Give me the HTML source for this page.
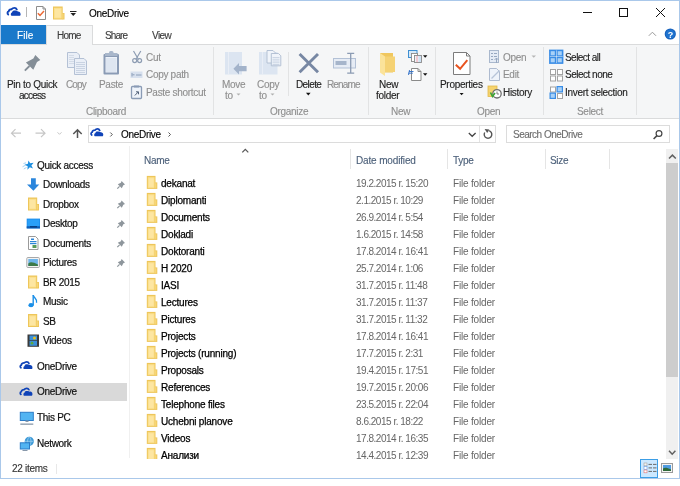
<!DOCTYPE html>
<html><head><meta charset="utf-8">
<style>
*{margin:0;padding:0;box-sizing:border-box}
html,body{width:680px;height:486px;overflow:hidden;background:#fff}
body{filter:blur(0.25px)}
body{position:relative;font-family:"Liberation Sans",sans-serif;font-size:10px;line-height:12px;letter-spacing:-0.3px;color:#000;-webkit-text-stroke:0.12px currentColor}
.a{position:absolute}
.t{position:absolute;white-space:nowrap}
svg{position:absolute;overflow:visible}
</style></head><body>
<div class="a" style="left:0px;top:0px;width:680px;height:479px;border:1px solid #aac8ea"></div>
<div class="t" style="left:89px;top:8px;color:#000">OneDrive</div>
<div class="a" style="left:1px;top:25px;width:45px;height:19px;background:#1979ca"></div>
<div class="t" style="left:17px;top:30px;color:#fff;letter-spacing:0.1px">File</div>
<div class="a" style="left:46px;top:25px;width:47px;height:20px;background:#f5f6f7;border:1px solid #dadbdc;border-bottom:none"></div>
<div class="t" style="left:57px;top:30px;color:#3c3c3c;letter-spacing:-0.75px">Home</div>
<div class="t" style="left:105px;top:30px;color:#3c3c3c;letter-spacing:-0.9px">Share</div>
<div class="t" style="left:152px;top:30px;color:#3c3c3c;letter-spacing:-0.55px">View</div>
<div class="a" style="left:1px;top:44px;width:678px;height:75px;background:#f5f6f7;border-top:1px solid #dadbdc;border-bottom:1px solid #dadbdc"></div>
<div class="a" style="left:47px;top:44px;width:45px;height:2px;background:#f5f6f7"></div>
<div class="a" style="left:213px;top:47px;width:1px;height:68px;background:#e2e3e4"></div>
<div class="a" style="left:368px;top:47px;width:1px;height:68px;background:#e2e3e4"></div>
<div class="a" style="left:435px;top:47px;width:1px;height:68px;background:#e2e3e4"></div>
<div class="a" style="left:543px;top:47px;width:1px;height:68px;background:#e2e3e4"></div>
<div class="a" style="left:636px;top:47px;width:1px;height:68px;background:#e2e3e4"></div>
<div class="a" style="left:288px;top:52px;width:1px;height:44px;background:#e2e3e4"></div>
<div class="t" style="left:7px;top:79px;color:#222;">Pin to Quick</div>
<div class="t" style="left:19px;top:90px;color:#222;letter-spacing:-0.8px">access</div>
<div class="t" style="left:66px;top:79px;color:#8f8f8f;letter-spacing:-0.9px">Copy</div>
<div class="t" style="left:99px;top:79px;color:#8f8f8f;">Paste</div>
<div class="t" style="left:146px;top:52px;color:#8f8f8f;">Cut</div>
<div class="t" style="left:146px;top:69px;color:#8f8f8f;">Copy path</div>
<div class="t" style="left:146px;top:87px;color:#8f8f8f;">Paste shortcut</div>
<div class="t" style="left:86px;top:106px;color:#8f8f8f;">Clipboard</div>
<div class="t" style="left:222px;top:79px;color:#8f8f8f;">Move</div>
<div class="t" style="left:225px;top:90px;color:#8f8f8f;">to</div>
<div class="t" style="left:257px;top:79px;color:#8f8f8f;">Copy</div>
<div class="t" style="left:259px;top:90px;color:#8f8f8f;">to</div>
<div class="t" style="left:296px;top:79px;color:#222;letter-spacing:-0.6px">Delete</div>
<div class="t" style="left:327px;top:79px;color:#8f8f8f;letter-spacing:-0.85px">Rename</div>
<div class="t" style="left:270px;top:106px;color:#8f8f8f;">Organize</div>
<div class="t" style="left:379px;top:79px;color:#222;">New</div>
<div class="t" style="left:376px;top:90px;color:#222;">folder</div>
<div class="t" style="left:391px;top:106px;color:#8f8f8f;">New</div>
<div class="t" style="left:440px;top:79px;color:#222;">Properties</div>
<div class="t" style="left:503px;top:52px;color:#8f8f8f;">Open</div>
<div class="t" style="left:503px;top:69px;color:#8f8f8f;">Edit</div>
<div class="t" style="left:503px;top:87px;color:#222;">History</div>
<div class="t" style="left:477px;top:106px;color:#8f8f8f;">Open</div>
<div class="t" style="left:565px;top:52px;color:#222;letter-spacing:-0.55px">Select all</div>
<div class="t" style="left:565px;top:69px;color:#222;letter-spacing:-0.5px">Select none</div>
<div class="t" style="left:565px;top:87px;color:#222;">Invert selection</div>
<div class="t" style="left:577px;top:106px;color:#8f8f8f;">Select</div>
<div class="a" style="left:88px;top:125px;width:408px;height:18px;border:1px solid #dcdcdc;background:#fff"></div>
<div class="a" style="left:479px;top:126px;width:1px;height:16px;background:#e3e3e3"></div>
<div class="a" style="left:506px;top:125px;width:164px;height:18px;border:1px solid #dcdcdc;background:#fff"></div>
<div class="t" style="left:121px;top:129px;color:#000">OneDrive</div>
<div class="t" style="left:513px;top:129px;color:#6d6d6d;letter-spacing:-0.5px">Search OneDrive</div>
<div class="a" style="left:129px;top:146px;width:1px;height:312px;background:#f0f0f0"></div>
<div class="a" style="left:1px;top:383px;width:126px;height:18px;background:#d9d9d9"></div>
<div class="t" style="left:37px;top:160px;color:#111;-webkit-text-stroke:0.2px #111">Quick access</div>
<div class="t" style="left:43px;top:179px;color:#111;-webkit-text-stroke:0.2px #111">Downloads</div>
<div class="t" style="left:43px;top:199px;color:#111;-webkit-text-stroke:0.2px #111">Dropbox</div>
<div class="t" style="left:43px;top:218px;color:#111;-webkit-text-stroke:0.2px #111">Desktop</div>
<div class="t" style="left:43px;top:238px;color:#111;-webkit-text-stroke:0.2px #111">Documents</div>
<div class="t" style="left:43px;top:257px;color:#111;-webkit-text-stroke:0.2px #111">Pictures</div>
<div class="t" style="left:43px;top:277px;color:#111;-webkit-text-stroke:0.2px #111">BR 2015</div>
<div class="t" style="left:43px;top:296px;color:#111;-webkit-text-stroke:0.2px #111">Music</div>
<div class="t" style="left:43px;top:316px;color:#111;-webkit-text-stroke:0.2px #111">SB</div>
<div class="t" style="left:43px;top:335px;color:#111;-webkit-text-stroke:0.2px #111">Videos</div>
<div class="t" style="left:37px;top:361px;color:#111;-webkit-text-stroke:0.2px #111">OneDrive</div>
<div class="t" style="left:37px;top:386px;color:#111;-webkit-text-stroke:0.2px #111">OneDrive</div>
<div class="t" style="left:37px;top:412px;color:#111;-webkit-text-stroke:0.2px #111">This PC</div>
<div class="t" style="left:37px;top:438px;color:#111;-webkit-text-stroke:0.2px #111">Network</div>
<div class="t" style="left:144px;top:155px;color:#4c607a;">Name</div>
<div class="t" style="left:356px;top:155px;color:#4c607a;letter-spacing:-0.15px">Date modified</div>
<div class="t" style="left:453px;top:155px;color:#4c607a;">Type</div>
<div class="t" style="left:550px;top:155px;color:#4c607a;">Size</div>
<div class="a" style="left:350px;top:149px;width:1px;height:20px;background:#e5e5e5"></div>
<div class="a" style="left:447px;top:149px;width:1px;height:20px;background:#e5e5e5"></div>
<div class="a" style="left:545px;top:149px;width:1px;height:20px;background:#e5e5e5"></div>
<div class="a" style="left:609px;top:149px;width:1px;height:20px;background:#e5e5e5"></div>
<div class="t" style="left:161px;top:178px;color:#000;letter-spacing:-0.2px;-webkit-text-stroke:0.25px #000">dekanat</div>
<div class="t" style="left:356px;top:178px;color:#666;letter-spacing:-0.48px;-webkit-text-stroke:0">19.2.2015 r. 15:20</div>
<div class="t" style="left:453px;top:178px;color:#666;letter-spacing:-0.18px;-webkit-text-stroke:0">File folder</div>
<div class="t" style="left:161px;top:195px;color:#000;letter-spacing:-0.2px;-webkit-text-stroke:0.25px #000">Diplomanti</div>
<div class="t" style="left:356px;top:195px;color:#666;letter-spacing:-0.48px;-webkit-text-stroke:0">2.1.2015 r. 10:29</div>
<div class="t" style="left:453px;top:195px;color:#666;letter-spacing:-0.18px;-webkit-text-stroke:0">File folder</div>
<div class="t" style="left:161px;top:212px;color:#000;letter-spacing:-0.2px;-webkit-text-stroke:0.25px #000">Documents</div>
<div class="t" style="left:356px;top:212px;color:#666;letter-spacing:-0.48px;-webkit-text-stroke:0">26.9.2014 r. 5:54</div>
<div class="t" style="left:453px;top:212px;color:#666;letter-spacing:-0.18px;-webkit-text-stroke:0">File folder</div>
<div class="t" style="left:161px;top:229px;color:#000;letter-spacing:-0.2px;-webkit-text-stroke:0.25px #000">Dokladi</div>
<div class="t" style="left:356px;top:229px;color:#666;letter-spacing:-0.48px;-webkit-text-stroke:0">1.6.2015 r. 14:58</div>
<div class="t" style="left:453px;top:229px;color:#666;letter-spacing:-0.18px;-webkit-text-stroke:0">File folder</div>
<div class="t" style="left:161px;top:246px;color:#000;letter-spacing:-0.2px;-webkit-text-stroke:0.25px #000">Doktoranti</div>
<div class="t" style="left:356px;top:246px;color:#666;letter-spacing:-0.48px;-webkit-text-stroke:0">17.8.2014 r. 16:41</div>
<div class="t" style="left:453px;top:246px;color:#666;letter-spacing:-0.18px;-webkit-text-stroke:0">File folder</div>
<div class="t" style="left:161px;top:263px;color:#000;letter-spacing:-0.2px;-webkit-text-stroke:0.25px #000">H 2020</div>
<div class="t" style="left:356px;top:263px;color:#666;letter-spacing:-0.48px;-webkit-text-stroke:0">25.7.2014 r. 1:06</div>
<div class="t" style="left:453px;top:263px;color:#666;letter-spacing:-0.18px;-webkit-text-stroke:0">File folder</div>
<div class="t" style="left:161px;top:280px;color:#000;letter-spacing:-0.2px;-webkit-text-stroke:0.25px #000">IASI</div>
<div class="t" style="left:356px;top:280px;color:#666;letter-spacing:-0.48px;-webkit-text-stroke:0">31.7.2015 r. 11:48</div>
<div class="t" style="left:453px;top:280px;color:#666;letter-spacing:-0.18px;-webkit-text-stroke:0">File folder</div>
<div class="t" style="left:161px;top:297px;color:#000;letter-spacing:-0.2px;-webkit-text-stroke:0.25px #000">Lectures</div>
<div class="t" style="left:356px;top:297px;color:#666;letter-spacing:-0.48px;-webkit-text-stroke:0">31.7.2015 r. 11:37</div>
<div class="t" style="left:453px;top:297px;color:#666;letter-spacing:-0.18px;-webkit-text-stroke:0">File folder</div>
<div class="t" style="left:161px;top:314px;color:#000;letter-spacing:-0.2px;-webkit-text-stroke:0.25px #000">Pictures</div>
<div class="t" style="left:356px;top:314px;color:#666;letter-spacing:-0.48px;-webkit-text-stroke:0">31.7.2015 r. 11:32</div>
<div class="t" style="left:453px;top:314px;color:#666;letter-spacing:-0.18px;-webkit-text-stroke:0">File folder</div>
<div class="t" style="left:161px;top:331px;color:#000;letter-spacing:-0.2px;-webkit-text-stroke:0.25px #000">Projects</div>
<div class="t" style="left:356px;top:331px;color:#666;letter-spacing:-0.48px;-webkit-text-stroke:0">17.8.2014 r. 16:41</div>
<div class="t" style="left:453px;top:331px;color:#666;letter-spacing:-0.18px;-webkit-text-stroke:0">File folder</div>
<div class="t" style="left:161px;top:348px;color:#000;letter-spacing:-0.2px;-webkit-text-stroke:0.25px #000">Projects (running)</div>
<div class="t" style="left:356px;top:348px;color:#666;letter-spacing:-0.48px;-webkit-text-stroke:0">17.7.2015 r. 2:31</div>
<div class="t" style="left:453px;top:348px;color:#666;letter-spacing:-0.18px;-webkit-text-stroke:0">File folder</div>
<div class="t" style="left:161px;top:365px;color:#000;letter-spacing:-0.2px;-webkit-text-stroke:0.25px #000">Proposals</div>
<div class="t" style="left:356px;top:365px;color:#666;letter-spacing:-0.48px;-webkit-text-stroke:0">19.4.2015 r. 17:51</div>
<div class="t" style="left:453px;top:365px;color:#666;letter-spacing:-0.18px;-webkit-text-stroke:0">File folder</div>
<div class="t" style="left:161px;top:382px;color:#000;letter-spacing:-0.2px;-webkit-text-stroke:0.25px #000">References</div>
<div class="t" style="left:356px;top:382px;color:#666;letter-spacing:-0.48px;-webkit-text-stroke:0">19.7.2015 r. 20:06</div>
<div class="t" style="left:453px;top:382px;color:#666;letter-spacing:-0.18px;-webkit-text-stroke:0">File folder</div>
<div class="t" style="left:161px;top:399px;color:#000;letter-spacing:-0.2px;-webkit-text-stroke:0.25px #000">Telephone files</div>
<div class="t" style="left:356px;top:399px;color:#666;letter-spacing:-0.48px;-webkit-text-stroke:0">23.5.2015 r. 22:04</div>
<div class="t" style="left:453px;top:399px;color:#666;letter-spacing:-0.18px;-webkit-text-stroke:0">File folder</div>
<div class="t" style="left:161px;top:416px;color:#000;letter-spacing:-0.2px;-webkit-text-stroke:0.25px #000">Uchebni planove</div>
<div class="t" style="left:356px;top:416px;color:#666;letter-spacing:-0.48px;-webkit-text-stroke:0">8.6.2015 r. 18:22</div>
<div class="t" style="left:453px;top:416px;color:#666;letter-spacing:-0.18px;-webkit-text-stroke:0">File folder</div>
<div class="t" style="left:161px;top:433px;color:#000;letter-spacing:-0.2px;-webkit-text-stroke:0.25px #000">Videos</div>
<div class="t" style="left:356px;top:433px;color:#666;letter-spacing:-0.48px;-webkit-text-stroke:0">17.8.2014 r. 16:35</div>
<div class="t" style="left:453px;top:433px;color:#666;letter-spacing:-0.18px;-webkit-text-stroke:0">File folder</div>
<div class="t" style="left:161px;top:450px;color:#000;letter-spacing:-0.2px;-webkit-text-stroke:0.25px #000">Анализи</div>
<div class="t" style="left:356px;top:450px;color:#666;letter-spacing:-0.48px;-webkit-text-stroke:0">14.4.2015 r. 12:39</div>
<div class="t" style="left:453px;top:450px;color:#666;letter-spacing:-0.18px;-webkit-text-stroke:0">File folder</div>
<div class="a" style="left:131px;top:459px;width:535px;height:19px;background:#fff"></div>
<div class="a" style="left:666px;top:149px;width:12px;height:310px;background:#f0f0f0"></div>
<div class="a" style="left:666px;top:163px;width:12px;height:214px;background:#cdcdcd"></div>
<div class="t" style="left:12px;top:463px;color:#333">22 items</div>
<div class="a" style="left:56px;top:464px;width:1px;height:10px;background:#e8e8e8"></div>
<div class="a" style="left:640px;top:459px;width:18px;height:19px;background:#cce8ff;border:1px solid #3c9ee6"></div>
<svg class="ic" width="680" height="486" style="left:0;top:0">
<g transform="translate(7,7.5) scale(1.0)"><path d="M1.2,6.9 C0.2,6.3 0.2,4.3 1.6,3.9 C2,2.3 3.4,1.7 4.6,1.7 C5.4,0.7 6.5,0.4 7.5,0.4 C8.5,0.4 9.4,1.1 9.8,2.1" fill="none" stroke="#0f43b8" stroke-width="1.9" stroke-linecap="round"/><path d="M4.6,8.3 C3.6,8.3 3.6,5.3 5,5.1 C5.2,3.5 6.5,3.1 8,3.1 C9.3,3.1 10.2,3.5 10.8,3.9 C12.5,3.8 13.6,5.1 13.6,6.7 C13.6,7.7 13.2,8.3 12.5,8.3 Z" fill="#0f43b8" stroke="#fff" stroke-width="1.3"/><path d="M4.6,8.3 C3.6,8.3 3.6,5.3 5,5.1 C5.2,3.5 6.5,3.1 8,3.1 C9.3,3.1 10.2,3.5 10.8,3.9 C12.5,3.8 13.6,5.1 13.6,6.7 C13.6,7.7 13.2,8.3 12.5,8.3 Z" fill="#0f43b8"/></g>
<rect x="26" y="7" width="1" height="10" fill="#b5b5b5"/>
<path d="M36.5,6.5H43L45.5,9V19.5H36.5Z" fill="#fff" stroke="#8c8c8c"/><path d="M43,6.5V9H45.5" fill="none" stroke="#8c8c8c"/>
<path d="M37.8,13.2L40,15.4L44,11" fill="none" stroke="#ec6a35" stroke-width="1.5"/>
<g transform="translate(53,6.5)"><rect x="0" y="0" width="9.7" height="13" fill="#eec65a"/><rect x="9.3" y="6.5" width="2.2" height="6.5" fill="#eec65a"/><rect x="1" y="1.3" width="7.7" height="10.7" fill="#fbe08e"/><rect x="2" y="2.5" width="5.7" height="8.5" fill="#fde6a2"/><rect x="9.2" y="7.3" width="1.4" height="4.7" fill="#f7d677"/></g>
<rect x="70" y="11" width="6.5" height="1" fill="#222"/><path d="M70.5,13H76L73.25,16Z" fill="#222"/>
<rect x="583" y="12" width="9" height="1" fill="#111"/>
<rect x="619.5" y="8.5" width="8" height="8" fill="none" stroke="#111"/>
<path d="M656,8L665,17M665,8L656,17" stroke="#111" stroke-width="1"/>
<path d="M648.8,35.8L652.4,32.2L656,35.8" fill="none" stroke="#9a9a9a" stroke-width="1"/>
<circle cx="670.3" cy="34" r="5.6" fill="#1660bb"/><circle cx="670.3" cy="34" r="4.6" fill="#1f73cf"/>
<text x="670.3" y="37.6" font-family="Liberation Sans" font-size="9" font-weight="bold" fill="#fff" text-anchor="middle">?</text>
<path d="M35.3,55.1L40.3,60L37,62L33.3,69.7L25.9,62.4L33.4,58.6Z" fill="#848e97"/><path d="M29.5,66L24.8,70.7" stroke="#848e97" stroke-width="1.8"/>
<path d="M67.5,52.5H77L79.5,55V67.5H67.5Z" fill="#eaeff7" stroke="#b4c1d5"/>
<path d="M74.5,58.5H84L86.5,61V74.5H74.5Z" fill="#eaeff7" stroke="#b4c1d5"/>
<rect x="76" y="62" width="9" height="1" fill="#c9d3e2"/>
<rect x="76" y="64" width="9" height="1" fill="#c9d3e2"/>
<rect x="76" y="66" width="9" height="1" fill="#c9d3e2"/>
<rect x="76" y="68" width="9" height="1" fill="#c9d3e2"/>
<rect x="76" y="70" width="9" height="1" fill="#c9d3e2"/>
<rect x="76" y="72" width="9" height="1" fill="#c9d3e2"/>
<rect x="69" y="55" width="5" height="1" fill="#d3dbe7"/>
<rect x="69" y="57" width="5" height="1" fill="#d3dbe7"/>
<rect x="69" y="59" width="5" height="1" fill="#d3dbe7"/>
<rect x="69" y="61" width="5" height="1" fill="#d3dbe7"/>
<rect x="69" y="63" width="5" height="1" fill="#d3dbe7"/>
<rect x="103.5" y="54" width="15.5" height="20.5" rx="1" fill="#8a9bb5"/><rect x="105.5" y="57" width="11.5" height="15.5" fill="#edf2fa"/>
<rect x="106" y="58.5" width="10.5" height="1" fill="#cfd9e8"/>
<rect x="106" y="60.5" width="10.5" height="1" fill="#cfd9e8"/>
<rect x="106" y="62.5" width="10.5" height="1" fill="#cfd9e8"/>
<rect x="106" y="64.5" width="10.5" height="1" fill="#cfd9e8"/>
<rect x="106" y="66.5" width="10.5" height="1" fill="#cfd9e8"/>
<rect x="106" y="68.5" width="10.5" height="1" fill="#cfd9e8"/>
<rect x="106" y="70.5" width="10.5" height="1" fill="#cfd9e8"/>
<rect x="105" y="53" width="12.5" height="3" fill="#a9b7cb"/><rect x="109" y="51" width="4.5" height="3" rx="1.5" fill="#a9b7cb"/>
<path d="M133.5,51L138.5,59.5M140.8,51L135.8,59.5" stroke="#8e9db3" stroke-width="1.2"/>
<circle cx="134.7" cy="60.6" r="2" fill="none" stroke="#8e9db3" stroke-width="1.2"/><circle cx="139.6" cy="60.6" r="2" fill="none" stroke="#8e9db3" stroke-width="1.2"/>
<rect x="130.5" y="71.5" width="12" height="6.5" fill="#d7e0ee"/><path d="M132,73V76.5M132.5,74.8H134.5M136,75H141.5" stroke="#8597b2" stroke-width="0.9"/>
<rect x="131.5" y="86.5" width="10" height="12" rx="1" fill="#eef3fa" stroke="#8a9bb5" stroke-width="1.3"/><rect x="134" y="85.5" width="5" height="2" fill="#8a9bb5"/>
<path d="M134.8,95.5L138.2,92M136,91.8H138.5V94.3" fill="none" stroke="#52627a" stroke-width="1"/>
<rect x="225" y="52" width="17" height="22.5" fill="#dce5f1"/><rect x="228" y="52" width="1" height="22.5" fill="#e9eef6"/>
<path d="M233.4,68.7L239,63V66H246.6V71.2H239V74.5Z" fill="#a3b3ca"/>
<rect x="259" y="52" width="18.5" height="22.5" fill="#dce5f1"/><rect x="262" y="52" width="1" height="22.5" fill="#e9eef6"/>
<path d="M267,50.5H273L275,52.5V63H267Z" fill="#f0f4fa" stroke="#aebcd0" stroke-width="0.9"/>
<path d="M271.3,53.5H278.5L280.8,55.8V65.8H271.3Z" fill="#f0f4fa" stroke="#aebcd0" stroke-width="0.9"/>
<rect x="272.5" y="57.0" width="7" height="0.8" fill="#c3cfe0"/>
<rect x="272.5" y="58.8" width="7" height="0.8" fill="#c3cfe0"/>
<rect x="272.5" y="60.6" width="7" height="0.8" fill="#c3cfe0"/>
<rect x="272.5" y="62.4" width="7" height="0.8" fill="#c3cfe0"/>
<rect x="272.5" y="64.2" width="7" height="0.8" fill="#c3cfe0"/>
<path d="M236.5,93.5H240.5L238.5,95.5Z" fill="#b0b0b0"/><path d="M270.5,93.5H274.5L272.5,95.5Z" fill="#b0b0b0"/>
<path d="M299.6,54L318,72.3M318,54L299.6,72.3" stroke="#7787a3" stroke-width="2.9"/>
<path d="M306,92.7H310.6L308.3,95.4Z" fill="#111"/>
<rect x="333.5" y="58.5" width="22" height="9.5" fill="#e6ecf5" stroke="#b3c1d6"/><rect x="335.5" y="61" width="11" height="4" fill="#a6b5cb"/>
<path d="M350.7,53.5V73M347.2,53.3H354.2M347.2,73.2H354.2" stroke="#8b9bb3" stroke-width="1.3"/>
<path d="M380,53H393V72.5H385Z" fill="#f0c75e"/><path d="M384,56.5H395V72H384Z" fill="#f5d274"/><path d="M380,53L385,56.5V76L380,72.5Z" fill="#fbe39a"/>
<rect x="408.5" y="50.5" width="8.5" height="7" fill="#d6e9f8" stroke="#3f8fd2"/>
<rect x="411.5" y="53.5" width="6" height="8" fill="#fff" stroke="#8a8a8a" stroke-width="0.9"/><rect x="414.5" y="55.5" width="7" height="7" fill="#eef3fa" stroke="#8a8a8a" stroke-width="0.9"/>
<rect x="416" y="56" width="2" height="6" fill="#f2c9cf"/><rect x="418.5" y="56" width="2.5" height="6" fill="#cfe3f5"/>
<path d="M423,55.3H427.4L425.2,57.7Z" fill="#111"/>
<path d="M411.5,68.5H418L421,71.5V80.5H411.5Z" fill="#fff" stroke="#8a8a8a"/><path d="M418,68.5V71.5H421" fill="none" stroke="#8a8a8a"/>
<path d="M409,71.5H413.5M408.3,73.2H412.8M409.5,70L408.5,75" stroke="#2f6fc8" stroke-width="0.9"/>
<path d="M423,73.3H427.4L425.2,75.7Z" fill="#111"/>
<path d="M453.5,52.5H466.5L470,56V74.5H453.5Z" fill="#fff" stroke="#7c7c7c"/><path d="M466.5,52.5V56H470" fill="none" stroke="#7c7c7c"/>
<path d="M455.8,64.8L460.1,68.8L467.3,60.2" fill="none" stroke="#e8531f" stroke-width="2"/>
<path d="M459.6,93H463.6L461.6,95.2Z" fill="#111"/>
<rect x="489.5" y="50.5" width="9" height="12" fill="#e4ebf5" stroke="#a9b8cd"/>
<path d="M491,53.5H493M491,56.5H493M491,59.5H493M494,53.5H497M494,56.5H497" stroke="#97a8c0" stroke-width="1"/><path d="M496.5,58V63M494.5,60L496.5,58L498.5,60" stroke="#97a8c0" fill="none" stroke-width="1"/>
<path d="M536,55.5H531.5L533.75,57.7Z" fill="#b5b5b5"/>
<path d="M489.5,68.5H496.5L499.5,71.5V80.5H489.5Z" fill="#eef3fa" stroke="#aebbd0"/><path d="M491.5,78.5L499.5,70.5" stroke="#b7c4d8" stroke-width="1.3"/>
<rect x="488" y="86" width="9" height="10.5" fill="#f5d36e" stroke="#e0b84a" stroke-width="0.8"/>
<circle cx="497" cy="93.8" r="4.2" fill="#fff" stroke="#6f6f6f" stroke-width="1.3"/><path d="M497,91.5V94H499" stroke="#6f6f6f" fill="none" stroke-width="0.9"/>
<path d="M490.5,92.5L492.5,96.5L495,93" fill="none" stroke="#3aa535" stroke-width="1.6"/>
<rect x="549.5" y="50" width="6.5" height="6.5" fill="#3a8de6"/><rect x="550.7" y="51.2" width="4.1" height="4.1" fill="#a9d1f7"/>
<rect x="556.5" y="50" width="6.5" height="6.5" fill="#3a8de6"/><rect x="557.7" y="51.2" width="4.1" height="4.1" fill="#a9d1f7"/>
<rect x="549.5" y="57" width="6.5" height="6.5" fill="#3a8de6"/><rect x="550.7" y="58.2" width="4.1" height="4.1" fill="#a9d1f7"/>
<rect x="556.5" y="57" width="6.5" height="6.5" fill="#3a8de6"/><rect x="557.7" y="58.2" width="4.1" height="4.1" fill="#a9d1f7"/>
<rect x="549.5" y="50" width="13.5" height="13.5" fill="none" stroke="#3a8de6" stroke-width="0.8"/>
<rect x="550.5" y="69.5" width="5" height="5" fill="#fff" stroke="#a3a3a3"/>
<rect x="557.5" y="69.5" width="5" height="5" fill="#fff" stroke="#a3a3a3"/>
<rect x="550.5" y="76.0" width="5" height="5" fill="#fff" stroke="#a3a3a3"/>
<rect x="557.5" y="76.0" width="5" height="5" fill="#fff" stroke="#a3a3a3"/>
<rect x="550.5" y="87.0" width="5" height="5" fill="#fff" stroke="#a3a3a3"/>
<rect x="556.5" y="86" width="6.5" height="6.5" fill="#3a8de6"/><rect x="557.7" y="87.2" width="4.1" height="4.1" fill="#a9d1f7"/>
<rect x="549.5" y="92.5" width="6.5" height="6.5" fill="#3a8de6"/><rect x="550.7" y="93.7" width="4.1" height="4.1" fill="#a9d1f7"/>
<rect x="557.5" y="93.5" width="5" height="5" fill="#fff" stroke="#a3a3a3"/>
<path d="M11.5,133.2H21M15.5,129.2L11.5,133.2L15.5,137.2" fill="none" stroke="#c6c6c6" stroke-width="1.2"/>
<path d="M35.5,133.2H45M41,129.2L45,133.2L41,137.2" fill="none" stroke="#c6c6c6" stroke-width="1.2"/>
<path d="M57.5,132.3L59.5,134.3L61.5,132.3" fill="none" stroke="#c6c6c6" stroke-width="1"/>
<path d="M77.5,138V129.8M73.3,134L77.5,129.8L81.7,134" fill="none" stroke="#555" stroke-width="1.5"/>
<g transform="translate(90.6,128.6) scale(0.93)"><path d="M1.2,6.9 C0.2,6.3 0.2,4.3 1.6,3.9 C2,2.3 3.4,1.7 4.6,1.7 C5.4,0.7 6.5,0.4 7.5,0.4 C8.5,0.4 9.4,1.1 9.8,2.1" fill="none" stroke="#0f43b8" stroke-width="1.9" stroke-linecap="round"/><path d="M4.6,8.3 C3.6,8.3 3.6,5.3 5,5.1 C5.2,3.5 6.5,3.1 8,3.1 C9.3,3.1 10.2,3.5 10.8,3.9 C12.5,3.8 13.6,5.1 13.6,6.7 C13.6,7.7 13.2,8.3 12.5,8.3 Z" fill="#0f43b8" stroke="#fff" stroke-width="1.3"/><path d="M4.6,8.3 C3.6,8.3 3.6,5.3 5,5.1 C5.2,3.5 6.5,3.1 8,3.1 C9.3,3.1 10.2,3.5 10.8,3.9 C12.5,3.8 13.6,5.1 13.6,6.7 C13.6,7.7 13.2,8.3 12.5,8.3 Z" fill="#0f43b8"/></g>
<path d="M110.3,132.5L112.3,134.5L110.3,136.5" fill="none" stroke="#555" stroke-width="1"/>
<path d="M168.5,132.5L170.5,134.5L168.5,136.5" fill="none" stroke="#555" stroke-width="1"/>
<path d="M468.8,133L472.2,136.3L475.6,133" fill="none" stroke="#444" stroke-width="1.3"/>
<path d="M488.66,130.66A3.8,3.8 0 1 1 484.71,132.5" fill="none" stroke="#555" stroke-width="1.4"/><path d="M484.6,129L489.3,129.6L487.2,133Z" fill="#555"/>
<circle cx="659" cy="133.5" r="2.9" fill="none" stroke="#444" stroke-width="1.2"/><path d="M657,135.6L653.6,139" stroke="#444" stroke-width="1.5"/>
<path d="M242.3,152.4L245.3,149.4L248.3,152.4" fill="none" stroke="#5a5a5a" stroke-width="1.3"/>
<path d="M22.5,166.8L25.5,165.2M23.5,163.5L26,162.8M23.8,169L26.5,167.5" stroke="#a8d4f4" stroke-width="1"/><path d="M28.38,160.41L30.21,163.37L33.64,162.75L31.39,165.41L33.04,168.48L29.82,167.16L27.41,169.68L27.67,166.20L24.53,164.69L27.91,163.86Z" fill="#1e8fe0"/>
<path d="M31,178.3H35.8V184.5H39.3L33.4,190.8L27,184.5H31Z" fill="#2b86dc"/>
<g transform="translate(117,181)"><path d="M4.6,0 L8,3.4 L6.3,4.2 L4.8,7.3 L0.8,3.3 L3.9,1.7Z" fill="#8e969c"/><path d="M2.6,5.4 L0.3,7.7" stroke="#8e969c" stroke-width="1.2"/></g>
<g transform="translate(117,200.5)"><path d="M4.6,0 L8,3.4 L6.3,4.2 L4.8,7.3 L0.8,3.3 L3.9,1.7Z" fill="#8e969c"/><path d="M2.6,5.4 L0.3,7.7" stroke="#8e969c" stroke-width="1.2"/></g>
<g transform="translate(117,220)"><path d="M4.6,0 L8,3.4 L6.3,4.2 L4.8,7.3 L0.8,3.3 L3.9,1.7Z" fill="#8e969c"/><path d="M2.6,5.4 L0.3,7.7" stroke="#8e969c" stroke-width="1.2"/></g>
<g transform="translate(117,239.5)"><path d="M4.6,0 L8,3.4 L6.3,4.2 L4.8,7.3 L0.8,3.3 L3.9,1.7Z" fill="#8e969c"/><path d="M2.6,5.4 L0.3,7.7" stroke="#8e969c" stroke-width="1.2"/></g>
<g transform="translate(117,259)"><path d="M4.6,0 L8,3.4 L6.3,4.2 L4.8,7.3 L0.8,3.3 L3.9,1.7Z" fill="#8e969c"/><path d="M2.6,5.4 L0.3,7.7" stroke="#8e969c" stroke-width="1.2"/></g>
<g transform="translate(28,197.5)"><rect x="0" y="0" width="9.2" height="13" fill="#eec65a"/><rect x="8.8" y="6.5" width="2.2" height="6.5" fill="#eec65a"/><rect x="1" y="1.3" width="7.2" height="10.7" fill="#fbe08e"/><rect x="2" y="2.5" width="5.2" height="8.5" fill="#fde6a2"/><rect x="8.7" y="7.3" width="1.4" height="4.7" fill="#f7d677"/></g>
<rect x="26.7" y="218.6" width="13.3" height="9.8" fill="#1b8cec"/><path d="M27.5,219.5H39.2V226H27.5Z" fill="#2aa0f8"/><rect x="26.7" y="226.3" width="13.3" height="2.1" fill="#0f5db5"/><path d="M30,226.8H37" stroke="#05306a" stroke-width="1"/>
<path d="M28.5,236.5H35.5L38,239V249.5H28.5Z" fill="#fff" stroke="#9a9a9a"/><rect x="30" y="241" width="6.5" height="1.2" fill="#2f86d8"/><rect x="30" y="243" width="6.5" height="1.2" fill="#2f86d8"/><rect x="32.5" y="245" width="4" height="3" fill="#5a9a5a"/><rect x="31" y="238.5" width="3" height="1.5" fill="#2f86d8"/>
<rect x="26.8" y="257.5" width="12.6" height="10" rx="1" fill="#f3f3f3" stroke="#a8a8a8"/><rect x="28.3" y="259" width="9.6" height="7" fill="#6eb5ea"/><path d="M28.3,263.5C30.5,261.5 33,262 37.9,264.5V266H28.3Z" fill="#3d7a48"/>
<g transform="translate(28,275.5)"><rect x="0" y="0" width="9.2" height="13" fill="#eec65a"/><rect x="8.8" y="6.5" width="2.2" height="6.5" fill="#eec65a"/><rect x="1" y="1.3" width="7.2" height="10.7" fill="#fbe08e"/><rect x="2" y="2.5" width="5.2" height="8.5" fill="#fde6a2"/><rect x="8.7" y="7.3" width="1.4" height="4.7" fill="#f7d677"/></g>
<path d="M33.2,295V305.3" stroke="#1a8fe8" stroke-width="1.4"/><ellipse cx="31" cy="305.2" rx="2.6" ry="2.1" fill="#1a8fe8"/><path d="M33.2,295.2C34,298.5 38,299 36.5,302.8" fill="none" stroke="#1a8fe8" stroke-width="1.4"/>
<g transform="translate(28,314)"><rect x="0" y="0" width="9.2" height="13" fill="#eec65a"/><rect x="8.8" y="6.5" width="2.2" height="6.5" fill="#eec65a"/><rect x="1" y="1.3" width="7.2" height="10.7" fill="#fbe08e"/><rect x="2" y="2.5" width="5.2" height="8.5" fill="#fde6a2"/><rect x="8.7" y="7.3" width="1.4" height="4.7" fill="#f7d677"/></g>
<rect x="27.5" y="334.5" width="11.5" height="12.3" fill="#3a3a3a"/><rect x="29.5" y="335.5" width="7.5" height="4.8" fill="#3b8fd8"/><rect x="29.5" y="341" width="7.5" height="4.8" fill="#3b8fd8"/><circle cx="34.5" cy="338" r="1.5" fill="#e8c020"/><circle cx="32" cy="343.2" r="1.4" fill="#5aa840"/>
<g transform="translate(19.8,361.4) scale(0.93)"><path d="M1.2,6.9 C0.2,6.3 0.2,4.3 1.6,3.9 C2,2.3 3.4,1.7 4.6,1.7 C5.4,0.7 6.5,0.4 7.5,0.4 C8.5,0.4 9.4,1.1 9.8,2.1" fill="none" stroke="#0f43b8" stroke-width="1.9" stroke-linecap="round"/><path d="M4.6,8.3 C3.6,8.3 3.6,5.3 5,5.1 C5.2,3.5 6.5,3.1 8,3.1 C9.3,3.1 10.2,3.5 10.8,3.9 C12.5,3.8 13.6,5.1 13.6,6.7 C13.6,7.7 13.2,8.3 12.5,8.3 Z" fill="#0f43b8" stroke="#fff" stroke-width="1.3"/><path d="M4.6,8.3 C3.6,8.3 3.6,5.3 5,5.1 C5.2,3.5 6.5,3.1 8,3.1 C9.3,3.1 10.2,3.5 10.8,3.9 C12.5,3.8 13.6,5.1 13.6,6.7 C13.6,7.7 13.2,8.3 12.5,8.3 Z" fill="#0f43b8"/></g>
<g transform="translate(19.8,388) scale(0.93)"><path d="M1.2,6.9 C0.2,6.3 0.2,4.3 1.6,3.9 C2,2.3 3.4,1.7 4.6,1.7 C5.4,0.7 6.5,0.4 7.5,0.4 C8.5,0.4 9.4,1.1 9.8,2.1" fill="none" stroke="#0f43b8" stroke-width="1.9" stroke-linecap="round"/><path d="M4.6,8.3 C3.6,8.3 3.6,5.3 5,5.1 C5.2,3.5 6.5,3.1 8,3.1 C9.3,3.1 10.2,3.5 10.8,3.9 C12.5,3.8 13.6,5.1 13.6,6.7 C13.6,7.7 13.2,8.3 12.5,8.3 Z" fill="#0f43b8" stroke="#d9d9d9" stroke-width="1.3"/><path d="M4.6,8.3 C3.6,8.3 3.6,5.3 5,5.1 C5.2,3.5 6.5,3.1 8,3.1 C9.3,3.1 10.2,3.5 10.8,3.9 C12.5,3.8 13.6,5.1 13.6,6.7 C13.6,7.7 13.2,8.3 12.5,8.3 Z" fill="#0f43b8"/></g>
<rect x="20.3" y="412.3" width="13" height="8.2" fill="#52b4f2" stroke="#2b7cc8" stroke-width="1"/><rect x="25.5" y="420.5" width="3" height="1.5" fill="#8a9aab"/><rect x="20.3" y="423.5" width="13" height="1.3" fill="#8898aa"/>
<circle cx="29.3" cy="441.3" r="4.6" fill="#3d9ad8"/><path d="M25,441.3H33.6M29.3,436.8C27,439 27,443.5 29.3,445.8M29.3,436.8C31.6,439 31.6,443.5 29.3,445.8" stroke="#a9d6f2" stroke-width="0.7" fill="none"/>
<rect x="20.3" y="442.8" width="9.2" height="6.2" fill="#52b4f2" stroke="#2b7cc8" stroke-width="1"/><rect x="22.5" y="450" width="5" height="1" fill="#8898aa"/>
<g transform="translate(146.8,175.9)"><rect x="0" y="0" width="8.7" height="13" fill="#eec65a"/><rect x="8.3" y="6.5" width="2.2" height="6.5" fill="#eec65a"/><rect x="1" y="1.3" width="6.7" height="10.7" fill="#fbe08e"/><rect x="2" y="2.5" width="4.7" height="8.5" fill="#fde6a2"/><rect x="8.2" y="7.3" width="1.4" height="4.7" fill="#f7d677"/></g>
<g transform="translate(146.8,192.9)"><rect x="0" y="0" width="8.7" height="13" fill="#eec65a"/><rect x="8.3" y="6.5" width="2.2" height="6.5" fill="#eec65a"/><rect x="1" y="1.3" width="6.7" height="10.7" fill="#fbe08e"/><rect x="2" y="2.5" width="4.7" height="8.5" fill="#fde6a2"/><rect x="8.2" y="7.3" width="1.4" height="4.7" fill="#f7d677"/></g>
<g transform="translate(146.8,209.9)"><rect x="0" y="0" width="8.7" height="13" fill="#eec65a"/><rect x="8.3" y="6.5" width="2.2" height="6.5" fill="#eec65a"/><rect x="1" y="1.3" width="6.7" height="10.7" fill="#fbe08e"/><rect x="2" y="2.5" width="4.7" height="8.5" fill="#fde6a2"/><rect x="8.2" y="7.3" width="1.4" height="4.7" fill="#f7d677"/></g>
<g transform="translate(146.8,226.9)"><rect x="0" y="0" width="8.7" height="13" fill="#eec65a"/><rect x="8.3" y="6.5" width="2.2" height="6.5" fill="#eec65a"/><rect x="1" y="1.3" width="6.7" height="10.7" fill="#fbe08e"/><rect x="2" y="2.5" width="4.7" height="8.5" fill="#fde6a2"/><rect x="8.2" y="7.3" width="1.4" height="4.7" fill="#f7d677"/></g>
<g transform="translate(146.8,243.9)"><rect x="0" y="0" width="8.7" height="13" fill="#eec65a"/><rect x="8.3" y="6.5" width="2.2" height="6.5" fill="#eec65a"/><rect x="1" y="1.3" width="6.7" height="10.7" fill="#fbe08e"/><rect x="2" y="2.5" width="4.7" height="8.5" fill="#fde6a2"/><rect x="8.2" y="7.3" width="1.4" height="4.7" fill="#f7d677"/></g>
<g transform="translate(146.8,260.9)"><rect x="0" y="0" width="8.7" height="13" fill="#eec65a"/><rect x="8.3" y="6.5" width="2.2" height="6.5" fill="#eec65a"/><rect x="1" y="1.3" width="6.7" height="10.7" fill="#fbe08e"/><rect x="2" y="2.5" width="4.7" height="8.5" fill="#fde6a2"/><rect x="8.2" y="7.3" width="1.4" height="4.7" fill="#f7d677"/></g>
<g transform="translate(146.8,277.9)"><rect x="0" y="0" width="8.7" height="13" fill="#eec65a"/><rect x="8.3" y="6.5" width="2.2" height="6.5" fill="#eec65a"/><rect x="1" y="1.3" width="6.7" height="10.7" fill="#fbe08e"/><rect x="2" y="2.5" width="4.7" height="8.5" fill="#fde6a2"/><rect x="8.2" y="7.3" width="1.4" height="4.7" fill="#f7d677"/></g>
<g transform="translate(146.8,294.9)"><rect x="0" y="0" width="8.7" height="13" fill="#eec65a"/><rect x="8.3" y="6.5" width="2.2" height="6.5" fill="#eec65a"/><rect x="1" y="1.3" width="6.7" height="10.7" fill="#fbe08e"/><rect x="2" y="2.5" width="4.7" height="8.5" fill="#fde6a2"/><rect x="8.2" y="7.3" width="1.4" height="4.7" fill="#f7d677"/></g>
<g transform="translate(146.8,311.9)"><rect x="0" y="0" width="8.7" height="13" fill="#eec65a"/><rect x="8.3" y="6.5" width="2.2" height="6.5" fill="#eec65a"/><rect x="1" y="1.3" width="6.7" height="10.7" fill="#fbe08e"/><rect x="2" y="2.5" width="4.7" height="8.5" fill="#fde6a2"/><rect x="8.2" y="7.3" width="1.4" height="4.7" fill="#f7d677"/></g>
<g transform="translate(146.8,328.9)"><rect x="0" y="0" width="8.7" height="13" fill="#eec65a"/><rect x="8.3" y="6.5" width="2.2" height="6.5" fill="#eec65a"/><rect x="1" y="1.3" width="6.7" height="10.7" fill="#fbe08e"/><rect x="2" y="2.5" width="4.7" height="8.5" fill="#fde6a2"/><rect x="8.2" y="7.3" width="1.4" height="4.7" fill="#f7d677"/></g>
<g transform="translate(146.8,345.9)"><rect x="0" y="0" width="8.7" height="13" fill="#eec65a"/><rect x="8.3" y="6.5" width="2.2" height="6.5" fill="#eec65a"/><rect x="1" y="1.3" width="6.7" height="10.7" fill="#fbe08e"/><rect x="2" y="2.5" width="4.7" height="8.5" fill="#fde6a2"/><rect x="8.2" y="7.3" width="1.4" height="4.7" fill="#f7d677"/></g>
<g transform="translate(146.8,362.9)"><rect x="0" y="0" width="8.7" height="13" fill="#eec65a"/><rect x="8.3" y="6.5" width="2.2" height="6.5" fill="#eec65a"/><rect x="1" y="1.3" width="6.7" height="10.7" fill="#fbe08e"/><rect x="2" y="2.5" width="4.7" height="8.5" fill="#fde6a2"/><rect x="8.2" y="7.3" width="1.4" height="4.7" fill="#f7d677"/></g>
<g transform="translate(146.8,379.9)"><rect x="0" y="0" width="8.7" height="13" fill="#eec65a"/><rect x="8.3" y="6.5" width="2.2" height="6.5" fill="#eec65a"/><rect x="1" y="1.3" width="6.7" height="10.7" fill="#fbe08e"/><rect x="2" y="2.5" width="4.7" height="8.5" fill="#fde6a2"/><rect x="8.2" y="7.3" width="1.4" height="4.7" fill="#f7d677"/></g>
<g transform="translate(146.8,396.9)"><rect x="0" y="0" width="8.7" height="13" fill="#eec65a"/><rect x="8.3" y="6.5" width="2.2" height="6.5" fill="#eec65a"/><rect x="1" y="1.3" width="6.7" height="10.7" fill="#fbe08e"/><rect x="2" y="2.5" width="4.7" height="8.5" fill="#fde6a2"/><rect x="8.2" y="7.3" width="1.4" height="4.7" fill="#f7d677"/></g>
<g transform="translate(146.8,413.9)"><rect x="0" y="0" width="8.7" height="13" fill="#eec65a"/><rect x="8.3" y="6.5" width="2.2" height="6.5" fill="#eec65a"/><rect x="1" y="1.3" width="6.7" height="10.7" fill="#fbe08e"/><rect x="2" y="2.5" width="4.7" height="8.5" fill="#fde6a2"/><rect x="8.2" y="7.3" width="1.4" height="4.7" fill="#f7d677"/></g>
<g transform="translate(146.8,430.9)"><rect x="0" y="0" width="8.7" height="13" fill="#eec65a"/><rect x="8.3" y="6.5" width="2.2" height="6.5" fill="#eec65a"/><rect x="1" y="1.3" width="6.7" height="10.7" fill="#fbe08e"/><rect x="2" y="2.5" width="4.7" height="8.5" fill="#fde6a2"/><rect x="8.2" y="7.3" width="1.4" height="4.7" fill="#f7d677"/></g>
<g transform="translate(146.8,447.9)"><rect x="0" y="0" width="8.7" height="13" fill="#eec65a"/><rect x="8.3" y="6.5" width="2.2" height="6.5" fill="#eec65a"/><rect x="1" y="1.3" width="6.7" height="10.7" fill="#fbe08e"/><rect x="2" y="2.5" width="4.7" height="8.5" fill="#fde6a2"/><rect x="8.2" y="7.3" width="1.4" height="4.7" fill="#f7d677"/></g>
<rect x="140" y="459" width="26" height="4" fill="#fff"/>
<path d="M669,158.5L672.4,155.1L675.8,158.5" fill="none" stroke="#606060" stroke-width="1.5"/>
<path d="M669,450.8L672.2,454.2L675.4,450.8" fill="none" stroke="#606060" stroke-width="1.5"/>
<rect x="644" y="463" width="3" height="2.8" fill="#f4f4f4" stroke="#a0a0a0" stroke-width="0.6"/><rect x="644" y="466.5" width="3" height="2.8" fill="#fff" stroke="#6a9ae0" stroke-width="0.6"/><rect x="644" y="470" width="3" height="2.8" fill="#fff" stroke="#e07070" stroke-width="0.6"/>
<path d="M648.5,464.4H652M653,464.4H656.5M648.5,467.9H652M653,467.9H656.5M648.5,471.4H652M653,471.4H656.5" stroke="#6a6a6a" stroke-width="1"/>
<rect x="661.5" y="463.5" width="11" height="9" fill="#f4f4f4" stroke="#9a9a9a"/><rect x="663" y="465" width="8" height="6" fill="#4f9be0"/><path d="M663,468.5C665,467 667,467.5 671,469.5V471H663Z" fill="#2e6a3a"/>
</svg>
</body></html>
